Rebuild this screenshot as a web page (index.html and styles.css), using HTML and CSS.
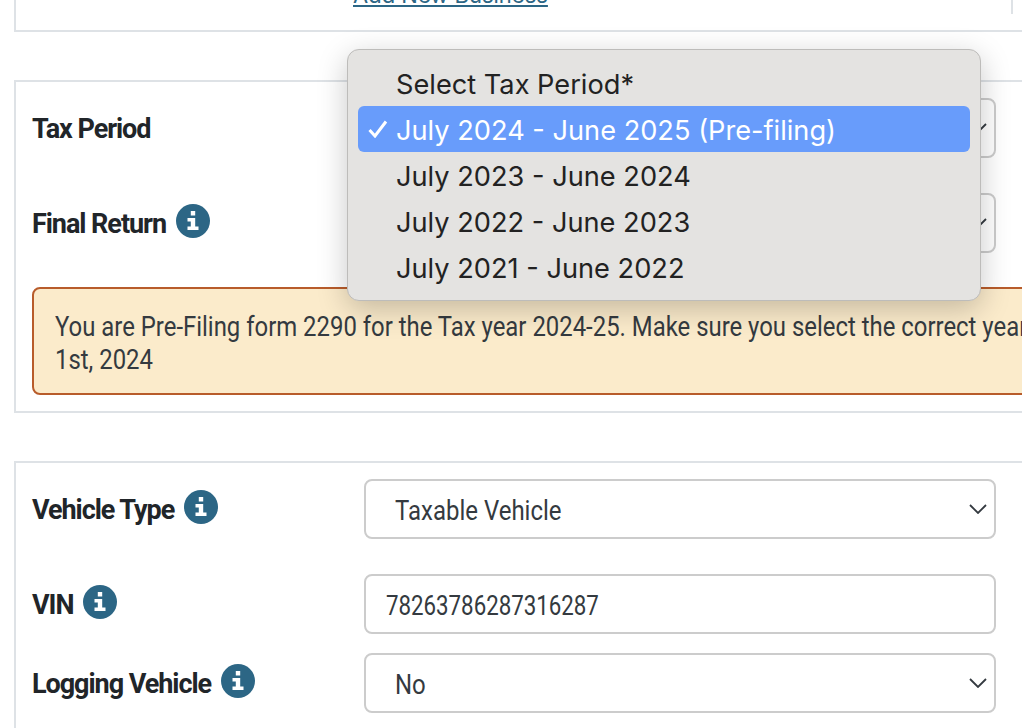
FILE: index.html
```html
<!DOCTYPE html>
<html lang="en">
<head>
    <meta charset="UTF-8">
    <meta name="viewport" content="width=device-width, initial-scale=1.0">
    <title>Form 2290 Filing</title>
    <link rel="stylesheet" href="styles.css">
</head>
<body>
    <div class="page">
        <section class="card card-business">
            <a class="add-link" href="#">Add New Business</a>
            <span class="divider"></span>
        </section>

        <section class="card card-period">
            <div class="row">
                <label class="label">Tax Period</label>
                <div class="field field-select"><span class="value">July 2024 - June 2025 (Pre-filing)</span></div>
            </div>
            <div class="row row-spaced">
                <label class="label">Final Return
                    <svg class="info" viewBox="0 0 34 34"><circle cx="17" cy="17" r="17"/><path d="M14.800 7h4.400v4.400h-4.400zM11.500 14h7.700v8.500h3.300v3.500h-11v-3.500h3.300v-5h-3.300z"/></svg>
                </label>
                <div class="field field-select"><span class="value">No</span></div>
            </div>
            <div class="notice"><p class="notice-text">You are Pre-Filing form 2290 for the Tax year 2024-25. Make sure you select the correct year<br>1st, 2024</p></div>

            <ul class="menu">
                <li>Select Tax Period*</li>
                <li class="selected">
                    <svg class="tick" viewBox="0 0 20 18"><path d="M1.500 10l5.500 6L18 1.500"/></svg>
                    July 2024 - June 2025 (Pre-filing)
                </li>
                <li>July 2023 - June 2024</li>
                <li>July 2022 - June 2023</li>
                <li>July 2021 - June 2022</li>
            </ul>
        </section>

        <section class="card card-vehicle">
            <div class="row">
                <label class="label">Vehicle Type
                    <svg class="info" viewBox="0 0 34 34"><circle cx="17" cy="17" r="17"/><path d="M14.800 7h4.400v4.400h-4.400zM11.500 14h7.700v8.500h3.300v3.500h-11v-3.500h3.300v-5h-3.300z"/></svg>
                </label>
                <div class="field field-select"><span class="value">Taxable Vehicle</span></div>
            </div>
            <div class="row row-spaced">
                <label class="label">VIN
                    <svg class="info" viewBox="0 0 34 34"><circle cx="17" cy="17" r="17"/><path d="M14.800 7h4.400v4.400h-4.400zM11.500 14h7.700v8.500h3.300v3.500h-11v-3.500h3.300v-5h-3.300z"/></svg>
                </label>
                <div class="field field-text"><span class="value value-digits">78263786287316287</span></div>
            </div>
            <div class="row row-close">
                <label class="label">Logging Vehicle
                    <svg class="info" viewBox="0 0 34 34"><circle cx="17" cy="17" r="17"/><path d="M14.800 7h4.400v4.400h-4.400zM11.500 14h7.700v8.500h3.300v3.500h-11v-3.500h3.300v-5h-3.300z"/></svg>
                </label>
                <div class="field field-select"><span class="value">No</span></div>
            </div>
        </section>
    </div>
</body>
</html>
```

FILE: styles.css
```css
html, body {
    margin: 0;
    height: 728px;
    overflow: hidden;
    background-color: #fff;
}

body {
    font-family: Roboto, sans-serif;
    color: #212529;
}

.page {
    width: 1100px;
    margin-top: -70px;
    padding-left: 14px;
}

.card {
    position: relative;
    box-sizing: border-box;
    width: 1086px;
    border: 2px solid #dee2e6;
    padding: 0 16px;
    margin-bottom: 48px;
}

.card-business {
    height: 102px;
    padding-top: 50px;
    padding-left: 337px;
}

.add-link {
    font-family: Inter, sans-serif;
    font-size: 22px;
    color: #2c6685;
}

.divider {
    position: absolute;
    left: 995px;
    top: 30px;
    width: 2px;
    height: 52px;
    background-color: #dee2e6;
}

.card-period {
    height: 333px;
    padding-top: 16px;
}

.card-vehicle {
    height: 400px;
    padding-top: 16px;
}

.row {
    display: flex;
    align-items: center;
    width: 964px;
}

.row-spaced {
    margin-top: 35px;
}

.row-close {
    margin-top: 19px;
}

.label {
    display: flex;
    align-items: center;
    gap: 10px;
    width: 332px;
    flex-shrink: 0;
    padding-top: 2px;
    font-size: 27px;
    font-weight: bold;
    letter-spacing: -1.050px;
}

.info {
    width: 34px;
    height: 34px;
    margin-top: -6px;
    fill: #2c6685;
}

.info path {
    fill: #fff;
}

.field {
    display: flex;
    align-items: center;
    box-sizing: border-box;
    width: 632px;
    height: 60px;
    padding: 4px 29px 0;
    border: 2px solid #ccc;
    border-radius: 8px;
    font-size: 27px;
    color: #343a40;
    background-color: #fff;
}

.field-select {
    background: #fff url("data:image/svg+xml,%3Csvg xmlns='http://www.w3.org/2000/svg' viewBox='0 0 18 10'%3E%3Cpath d='M1 1l8 8 8-8' fill='none' stroke='%23343a40' stroke-width='1.800'/%3E%3C/svg%3E") no-repeat right 7px center / 18px 10px;
}

.field-text {
    padding: 4px 20px 0;
}

/* no condensed font here, so squeeze the text sideways */
.value {
    white-space: nowrap;
    transform: scaleX(0.888);
    transform-origin: left center;
}

.value-digits {
    transform: scaleX(0.825);
}

.notice {
    box-sizing: border-box;
    width: 1040px;
    height: 108px;
    margin-top: 34px;
    padding: 22px 21px;
    border: 2px solid #b85c2b;
    border-radius: 8px;
    background-color: #fbebcb;
    overflow: hidden;
}

.notice-text {
    margin: 0;
    font-size: 27px;
    line-height: 33px;
    color: #343a40;
    white-space: nowrap;
    transform: scaleX(0.885);
    transform-origin: left center;
}

.menu {
    position: absolute;
    left: 331px;
    top: -33px;
    width: 634px;
    height: 252px;
    box-sizing: border-box;
    margin: 0;
    padding: 10px 10px;
    list-style: none;
    background-color: #e4e3e1;
    border: 1px solid #bdbcba;
    border-radius: 12px;
    box-shadow: 0 8px 30px rgba(0, 0, 0, 0.22);
    font-family: Inter, sans-serif;
    font-size: 27.200px;
    color: #222;
}

.menu li {
    position: relative;
    height: 46px;
    line-height: 50px;
    padding-left: 38px;
    border-radius: 6px;
}

.menu .selected {
    background-color: #689cfb;
    color: #fff;
}

.tick {
    position: absolute;
    left: 10px;
    top: 14px;
    width: 20px;
    height: 18px;
    fill: none;
    stroke: #fff;
    stroke-width: 3;
}
```
